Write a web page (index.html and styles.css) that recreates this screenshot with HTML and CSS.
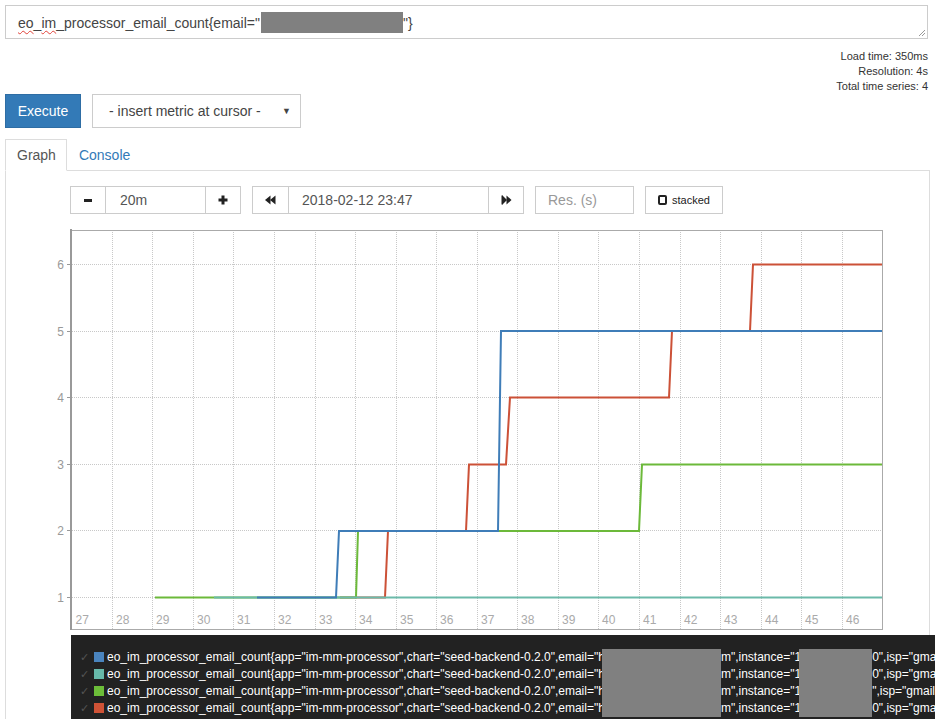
FILE: index.html
```html
<!DOCTYPE html>
<html>
<head>
    <title>Prometheus Time Series Collection and Processing Server</title>
    <meta charset="utf-8">

    <link rel="stylesheet" href="styles.css">
</head>

<body>
    <div class="expression_input">
        <span class="spell">eo</span>_<span class="spell">im</span>_processor_email_count{email="<span class="redacted"></span>"}
        <svg class="resize_handle" width="8" height="8" viewBox="0 0 8 8">
            <line x1="1" y1="7" x2="7" y2="1" stroke="#999" stroke-width="1"/>
            <line x1="4" y1="7" x2="7" y2="4" stroke="#999" stroke-width="1"/>
        </svg>
    </div>

    <div class="eval_stats">
        Load time: 350ms<br>
        Resolution: 4s<br>
        Total time series: 4
    </div>

    <div class="actions">
        <button type="button" class="execute_btn">Execute</button>
        <div class="metric_select">
            <span>- insert metric at cursor -</span>
            <span class="caret">&#9660;</span>
        </div>
    </div>

    <div class="nav_tabs">
        <div class="tab active">Graph</div>
        <div class="tab">Console</div>
    </div>

    <div class="tab_pane">
        <div class="graph_controls">
            <div class="input_group">
                <button type="button" class="btn_icon">
                    <svg width="10" height="10" viewBox="0 0 10 10"><rect x="1" y="4" width="8" height="3" fill="#222"/></svg>
                </button>
                <input class="range_input" type="text" value="20m">
                <button type="button" class="btn_icon">
                    <svg width="10" height="10" viewBox="0 0 10 10"><rect x="0.5" y="3.5" width="9" height="3" fill="#222"/><rect x="3.5" y="0.5" width="3" height="9" fill="#222"/></svg>
                </button>
            </div>
            <div class="input_group">
                <button type="button" class="btn_icon btn_rewind">
                    <svg width="11" height="10" viewBox="0 0 11 10"><polygon points="0,5 5.5,0.5 5.5,9.5" fill="#222"/><polygon points="5,5 10.5,0.5 10.5,9.5" fill="#222"/></svg>
                </button>
                <input class="end_input" type="text" value="2018-02-12 23:47">
                <button type="button" class="btn_icon">
                    <svg width="11" height="10" viewBox="0 0 11 10"><rect x="0.5" y="0.5" width="1.5" height="9" fill="#222"/><polygon points="1.5,0.5 6,5 1.5,9.5" fill="#222"/><polygon points="5.5,0.5 10.5,5 5.5,9.5" fill="#222"/></svg>
                </button>
            </div>
            <input class="res_input" type="text" placeholder="Res. (s)">
            <button type="button" class="stacked_btn"><span class="stack_box"></span>stacked</button>
        </div>

        <svg class="graph" width="923" height="405" viewBox="6 225 923 405">
            <g stroke="#c8c8c8" stroke-width="1" stroke-dasharray="1 1">
                <line x1="112.5" y1="230" x2="112.5" y2="629"/>
                <line x1="152.5" y1="230" x2="152.5" y2="629"/>
                <line x1="193.5" y1="230" x2="193.5" y2="629"/>
                <line x1="233.5" y1="230" x2="233.5" y2="629"/>
                <line x1="274.5" y1="230" x2="274.5" y2="629"/>
                <line x1="315.5" y1="230" x2="315.5" y2="629"/>
                <line x1="355.5" y1="230" x2="355.5" y2="629"/>
                <line x1="396.5" y1="230" x2="396.5" y2="629"/>
                <line x1="436.5" y1="230" x2="436.5" y2="629"/>
                <line x1="477.5" y1="230" x2="477.5" y2="629"/>
                <line x1="517.5" y1="230" x2="517.5" y2="629"/>
                <line x1="558.5" y1="230" x2="558.5" y2="629"/>
                <line x1="598.5" y1="230" x2="598.5" y2="629"/>
                <line x1="639.5" y1="230" x2="639.5" y2="629"/>
                <line x1="680.5" y1="230" x2="680.5" y2="629"/>
                <line x1="720.5" y1="230" x2="720.5" y2="629"/>
                <line x1="761.5" y1="230" x2="761.5" y2="629"/>
                <line x1="801.5" y1="230" x2="801.5" y2="629"/>
                <line x1="842.5" y1="230" x2="842.5" y2="629"/>
                <line x1="72" y1="264.5" x2="882" y2="264.5"/>
                <line x1="72" y1="331.5" x2="882" y2="331.5"/>
                <line x1="72" y1="397.5" x2="882" y2="397.5"/>
                <line x1="72" y1="464.5" x2="882" y2="464.5"/>
                <line x1="72" y1="530.5" x2="882" y2="530.5"/>
                <line x1="72" y1="597.5" x2="882" y2="597.5"/>
            </g>

            <g fill="none" stroke="#aaa" stroke-width="1">
                <line x1="71" y1="230.5" x2="882.5" y2="230.5"/>
                <line x1="71" y1="629.5" x2="882.5" y2="629.5"/>
                <line x1="882.5" y1="230" x2="882.5" y2="630"/>
            </g>
            <g stroke="#999">
                <line x1="71" y1="229" x2="71" y2="631" stroke-width="2"/>
                <line x1="67" y1="264.5" x2="71" y2="264.5"/>
                <line x1="67" y1="331.5" x2="71" y2="331.5"/>
                <line x1="67" y1="397.5" x2="71" y2="397.5"/>
                <line x1="67" y1="464.5" x2="71" y2="464.5"/>
                <line x1="67" y1="530.5" x2="71" y2="530.5"/>
                <line x1="67" y1="597.5" x2="71" y2="597.5"/>
                <line x1="67" y1="630.5" x2="71" y2="630.5"/>
            </g>

            <g class="y_labels" text-anchor="end">
                <text x="64" y="268.5">6</text>
                <text x="64" y="335.5">5</text>
                <text x="64" y="401.5">4</text>
                <text x="64" y="468.5">3</text>
                <text x="64" y="534.5">2</text>
                <text x="64" y="601.5">1</text>
            </g>

            <g class="x_labels">
                <text x="75.5" y="624">27</text>
                <text x="116" y="624">28</text>
                <text x="156" y="624">29</text>
                <text x="197" y="624">30</text>
                <text x="237" y="624">31</text>
                <text x="278" y="624">32</text>
                <text x="319" y="624">33</text>
                <text x="359" y="624">34</text>
                <text x="400" y="624">35</text>
                <text x="440" y="624">36</text>
                <text x="481" y="624">37</text>
                <text x="521" y="624">38</text>
                <text x="562" y="624">39</text>
                <text x="602" y="624">40</text>
                <text x="643" y="624">41</text>
                <text x="684" y="624">42</text>
                <text x="724" y="624">43</text>
                <text x="765" y="624">44</text>
                <text x="805" y="624">45</text>
                <text x="846" y="624">46</text>
            </g>

            <g fill="none" stroke-width="2" stroke-linejoin="miter">
                <polyline stroke="#cc5137" points="340,597.5 385,597.5 388,531 466,531 469,464.5 506,464.5 510,397.5 669,397.5 672,331 750,331 753,264.5 882,264.5"/>
                <polyline stroke="#6cb93a" points="155,597.5 356,597.5 358,531 639,531 642,464.5 882,464.5"/>
                <polyline stroke="#6bbaa9" points="214,597.5 882,597.5"/>
                <polyline stroke="#3f7db8" points="257,597.5 336,597.5 339,531 498,531 501,331 882,331"/>
            </g>
        </svg>

        <div class="legend">
            <div class="legend_row">
                <span class="check">&#10003;</span><span class="swatch swatch_blue"></span>eo_im_processor_email_count{app="im-mm-processor",chart="seed-backend-0.2.0",email="h<span class="redacted_row gap_email"></span>m",instance="1<span class="redacted_row gap_ip"></span>0",isp="gmail",job="kubernetes-pods"}
            </div>
            <div class="legend_row">
                <span class="check">&#10003;</span><span class="swatch swatch_teal"></span>eo_im_processor_email_count{app="im-mm-processor",chart="seed-backend-0.2.0",email="h<span class="redacted_row gap_email"></span>m",instance="1<span class="redacted_row gap_ip"></span>0",isp="gmail",job="kubernetes-pods"}
            </div>
            <div class="legend_row">
                <span class="check">&#10003;</span><span class="swatch swatch_green"></span>eo_im_processor_email_count{app="im-mm-processor",chart="seed-backend-0.2.0",email="h<span class="redacted_row gap_email"></span>m",instance="1<span class="redacted_row gap_ip"></span>",isp="gmail",job="kubernetes-pods"}
            </div>
            <div class="legend_row">
                <span class="check">&#10003;</span><span class="swatch swatch_red"></span>eo_im_processor_email_count{app="im-mm-processor",chart="seed-backend-0.2.0",email="h<span class="redacted_row gap_email"></span>m",instance="1<span class="redacted_row gap_ip"></span>0",isp="gmail",job="kubernetes-pods"}
            </div>
        </div>
    </div>
</body>
</html>
```

FILE: styles.css
```css
html {overflow: hidden;}
body {
    margin: 0;
    padding: 5px;
    font-family: "Liberation Sans", Arial, sans-serif;
    font-size: 14px;
    color: #333;
    background-color: #fff;
}

/* query box */
.expression_input {
    position: relative;
    box-sizing: border-box;
    width: 923px;
    height: 34px;
    padding: 6px 12px;
    line-height: 20px;
    border: 1px solid #ccc;
    color: #444;
    white-space: nowrap;
}
.spell {
    text-decoration: underline wavy #e0413a;
    text-decoration-thickness: 1px;
    text-underline-offset: 2px;
}
.redacted {
    display: inline-block;
    width: 142px;
    height: 21px;
    margin-left: 1px;
    vertical-align: -5px;
    background-color: #808080;
}
.resize_handle {
    position: absolute;
    right: 1px;
    bottom: 1px;
}

.eval_stats {
    margin: 10px 2px 0 0;
    text-align: right;
    font-size: 11px;
    line-height: 15px;
}

.actions {
    display: flex;
    gap: 11px;
    margin-bottom: 11px;
}
.execute_btn {
    box-sizing: border-box;
    width: 76px;
    height: 34px;
    padding: 0;
    font-family: inherit;
    font-size: 14px;
    color: #fff;
    background-color: #337ab7;
    border: 1px solid #2e6da4;
}
.metric_select {
    box-sizing: border-box;
    width: 209px;
    height: 34px;
    display: flex;
    align-items: center;
    justify-content: space-between;
    padding: 0 9px 0 16px;
    border: 1px solid #ccc;
    color: #444;
}
.caret {
    font-size: 9px;
    color: #444;
}

/* tabs */
.nav_tabs {
    display: flex;
    position: relative;
    z-index: 1;
}
.tab {
    padding: 5px 11px;
    line-height: 20px;
    border: 1px solid transparent;
    margin-bottom: -1px;
    color: #337ab7;
}
.tab.active {
    color: #555;
    background-color: #fff;
    border-color: #ddd;
    border-bottom-color: #fff;
    padding: 5px 10px 5px 11px;
}
.tab_pane {
    border: 1px solid #ddd;
    padding-top: 15px;
    min-height: 620px;
}

/* graph controls */
.graph_controls {
    display: flex;
    gap: 11px;
    margin-left: 64px;
    height: 28px;
}
.input_group {display: flex;}
.btn_icon {
    box-sizing: border-box;
    width: 36px;
    height: 28px;
    padding: 0;
    display: flex;
    align-items: center;
    justify-content: center;
    background-color: #fff;
    border: 1px solid #ccc;
}
.btn_rewind {width: 37px;}
.input_group input,
.res_input {
    box-sizing: border-box;
    height: 28px;
    margin: 0;
    font-family: inherit;
    font-size: 14px;
    color: #555;
    border: 1px solid #ccc;
    outline: none;
}
.range_input {
    width: 99px;
    padding: 0 14px;
    border-left: 0 !important;
    border-right: 0 !important;
}
.end_input {
    width: 199px;
    padding: 0 13px;
    border-left: 0 !important;
    border-right: 0 !important;
}
.res_input {
    width: 99px;
    padding: 0 12px;
}
.res_input::placeholder {color: #999;}
.stacked_btn {
    box-sizing: border-box;
    width: 78px;
    height: 28px;
    padding: 0 0 0 12px;
    display: flex;
    align-items: center;
    font-family: inherit;
    font-size: 11px;
    color: #222;
    background-color: #fff;
    border: 1px solid #ccc;
}
.stack_box {
    box-sizing: border-box;
    width: 9px;
    height: 10px;
    margin-right: 5px;
    border: 2px solid #222;
    border-radius: 2px;
}

/* chart */
.graph {
    display: block;
    margin-top: 11px;
}
.y_labels text,
.x_labels text {
    font-family: "Liberation Sans", Arial, sans-serif;
    font-size: 12px;
    fill: #999;
}
.x_labels text {fill: #aaa;}

/* legend */
.legend {
    margin: 5px -30px 0 65px;
    padding: 14px 0 12px 9px;
    background-color: #222;
    color: #fff;
    font-size: 12px;
    line-height: 17px;
    white-space: nowrap;
    overflow: hidden;
}
.legend_row {height: 17px;}
.check {
    display: inline-block;
    width: 14px;
    color: #555;
    font-size: 11px;
}
.swatch {
    display: inline-block;
    width: 10px;
    height: 10px;
    margin-right: 3px;
    vertical-align: -1px;
}
.swatch_blue {background-color: #4a84be;}
.swatch_teal {background-color: #67b9aa;}
.swatch_green {background-color: #6cbd39;}
.swatch_red {background-color: #cf5236;}
.redacted_row {
    display: inline-block;
    height: 17px;
    vertical-align: top;
    background-color: #808080;
}
.gap_email {width: 119px; margin-left: -3px;}
.gap_ip {width: 73px; margin-left: -2px;}
```
